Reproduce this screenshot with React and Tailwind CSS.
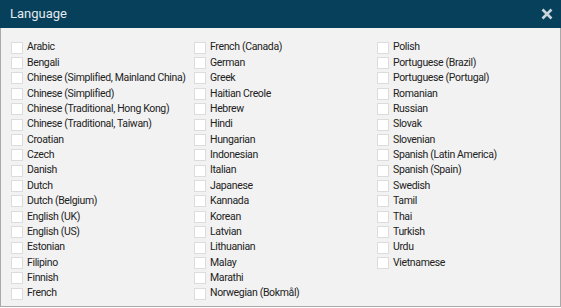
import React from "react";

const cols = [
  ["Arabic","Bengali","Chinese (Simplified, Mainland China)","Chinese (Simplified)","Chinese (Traditional, Hong Kong)","Chinese (Traditional, Taiwan)","Croatian","Czech","Danish","Dutch","Dutch (Belgium)","English (UK)","English (US)","Estonian","Filipino","Finnish","French"],
  ["French (Canada)","German","Greek","Haitian Creole","Hebrew","Hindi","Hungarian","Indonesian","Italian","Japanese","Kannada","Korean","Latvian","Lithuanian","Malay","Marathi","Norwegian (Bokmål)"],
  ["Polish","Portuguese (Brazil)","Portuguese (Portugal)","Romanian","Russian","Slovak","Slovenian","Spanish (Latin America)","Spanish (Spain)","Swedish","Tamil","Thai","Turkish","Urdu","Vietnamese"],
];

export default function App() {
  return (
    <div className="w-[561px] h-[308px] bg-white overflow-hidden" style={{ fontFamily: "Roboto, 'Liberation Sans', sans-serif" }}>
      <div className="h-[28px] bg-[#07405a] flex items-center justify-between pl-[10px] pr-[8px]">
        <span className="text-[13px] text-[#e4eaee]">Language</span>
        <svg width="12" height="12" viewBox="0 0 12 12" className="mb-[1px]">
          <path d="M1.5 1.5 L10.5 10.5 M10.5 1.5 L1.5 10.5" stroke="#c9d5db" strokeWidth="2.6" strokeLinecap="butt" />
        </svg>
      </div>
      <div className="h-[279px] bg-[#f2f2f2] border-x border-b border-[#a9a9a9] pl-[10px] pt-[12px] flex">
        {cols.map((c, i) => (
          <div key={i} className="w-[183px] flex flex-col">
            {c.map((l) => (
              <div key={l} className="h-[15.375px] flex items-center">
                <span className="w-[12px] h-[12px] bg-white border border-[#dcdcdc] shrink-0" />
                <span className="ml-[4px] text-[10.5px] tracking-[-0.35px] text-[#222] whitespace-nowrap leading-none">{l}</span>
              </div>
            ))}
          </div>
        ))}
      </div>
    </div>
  );
}
